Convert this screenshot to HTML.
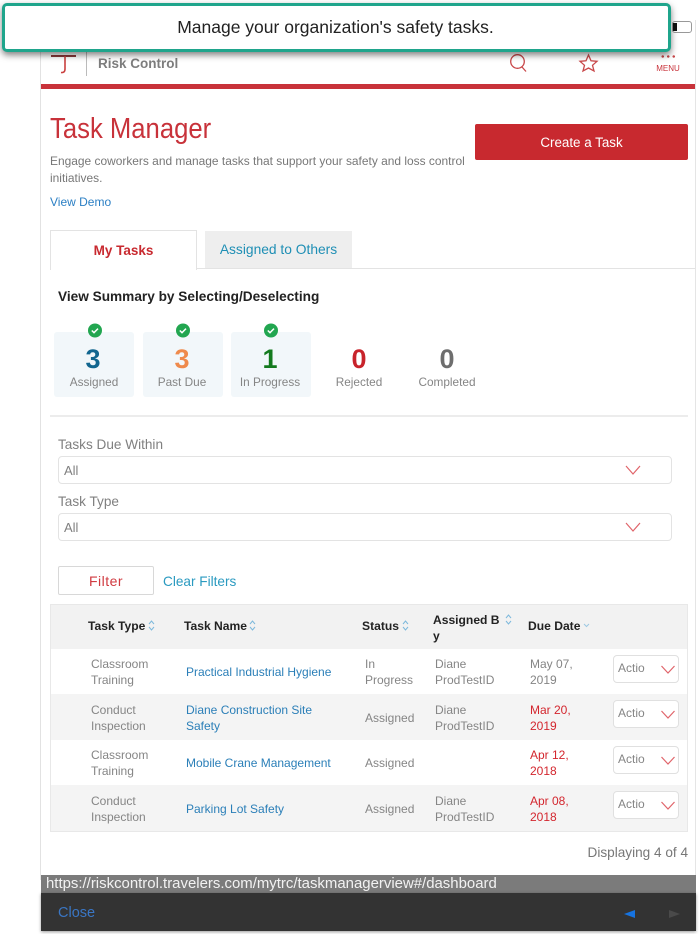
<!DOCTYPE html>
<html><head><meta charset="utf-8">
<style>
html,body{margin:0;padding:0;background:#fff}
body{width:700px;height:934px;position:relative;overflow:hidden;font-family:"Liberation Sans",sans-serif;color:#777}
#w{position:absolute;left:0;top:0;width:700px;height:934px;filter:blur(.35px)}
.a{position:absolute;white-space:nowrap}
.c{text-align:center}
.card{position:absolute;top:332px;width:80px;height:65px;background:#f2f7fa;border-radius:3px}
.num{position:absolute;top:343px;width:80px;text-align:center;font-size:27px;font-weight:bold;line-height:32px}
.lab{position:absolute;top:375px;width:90px;text-align:center;font-size:11.800px;line-height:15px;color:#858585}
.sel{position:absolute;left:58px;width:612px;height:26px;border:1px solid #e3e3e3;border-radius:4px;background:#fff}
.t{position:absolute;font-size:12px;line-height:16px;color:#858585}
.th{position:absolute;font-size:12.100px;font-weight:bold;color:#222;line-height:16px;white-space:nowrap}
.l{color:#2b7fb8;white-space:nowrap}
.r{color:#d3262e}
.act{position:absolute;left:613px;width:64px;height:26px;border:1px solid #e0e0e0;border-radius:4px;background:#fff;font-size:12px;color:#858585;line-height:25px;text-indent:4px}
svg{position:absolute;overflow:visible}
</style></head><body><div id="w">
<div style="position:absolute;left:40px;top:20px;width:1px;height:860px;background:#e2e2e2"></div>
<div style="position:absolute;left:695px;top:20px;width:1px;height:860px;background:#e5e5e5"></div>

<!-- header -->
<svg style="left:50px;top:52px" width="30" height="24" fill="none" stroke="#c9403f" stroke-width="1.6"><path d="M1 4H26" stroke="#8a3a3a" stroke-width="2"/><path d="M15 4V17Q15 21 11 20.500" /></svg>
<div style="position:absolute;left:86px;top:52px;width:1px;height:24px;background:#bbb"></div>
<div class="a" style="left:98px;top:55px;font-size:13.500px;font-weight:bold;color:#7d7d7d;line-height:17px">Risk Control</div>
<svg style="left:508px;top:53px" width="20" height="20" fill="none" stroke="#c9484a" stroke-width="1.3"><circle cx="9.500" cy="8.500" r="6.800"/><path d="M14 14L18 18.500"/></svg>
<svg style="left:578px;top:53px" width="20" height="20" fill="none" stroke="#c9484a" stroke-width="1.3"><path d="M10.500 2L13 7.800L19 8.300L14.500 12.300L16 18L10.500 15L5 18L6.500 12.300L2 8.300L8 7.800Z"/></svg>
<div class="a" style="left:660px;top:55px;width:16px;height:3px;background:radial-gradient(circle,#c9484a 1.100px,transparent 1.400px) 0 0/5.500px 3px"></div>
<div class="a c" style="left:650px;top:63px;width:36px;font-size:8px;color:#c8323a;line-height:11px">MENU</div>
<div style="position:absolute;left:41px;top:84px;width:654px;height:5px;background:#c8323a"></div>

<!-- tooltip battery -->
<div style="position:absolute;left:672px;top:21px;width:18px;height:10px;border:1px solid #999;border-radius:3px;background:#fff"><div style="position:absolute;left:0;top:1px;width:4px;height:8px;background:#111"></div></div>

<!-- callout -->
<div style="position:absolute;left:2px;top:3px;width:663px;height:43px;border:3px solid #1fa58c;border-radius:5px;background:#fff;box-shadow:0 3px 7px rgba(0,0,0,.5)"></div>
<div class="a c" style="left:1px;top:17px;width:669px;font-size:17.500px;color:#222;line-height:21px">Manage your organization's safety tasks.</div>

<!-- title -->
<div class="a" style="left:50px;top:113px;font-size:29px;color:#c8323a;line-height:33px;transform:scaleX(.885);transform-origin:0 0">Task Manager</div>
<div class="a" style="left:50px;top:153px;font-size:11.950px;line-height:17px;color:#777">Engage coworkers and manage tasks that support your safety and loss control<br>initiatives.</div>
<div class="a" style="left:50px;top:195px;font-size:12px;line-height:15px;color:#2b7fc4">View Demo</div>
<div class="a c" style="left:475px;top:124px;width:213px;height:36px;background:#c8292f;border-radius:2px;color:#fff;font-size:13.400px;line-height:37px">Create a Task</div>

<!-- tabs -->
<div style="position:absolute;left:50px;top:268px;width:645px;height:1px;background:#e3e3e3"></div>
<div class="a c" style="left:50px;top:230px;width:145px;height:39px;border:1px solid #e3e3e3;border-bottom:0;background:#fff;color:#c8292f;font-weight:bold;font-size:13.500px;line-height:39px">My Tasks</div>
<div class="a c" style="left:205px;top:231px;width:147px;height:37px;background:#eeeeee;color:#1f8fb5;font-size:13.800px;line-height:37px">Assigned to Others</div>

<div class="a" style="left:58px;top:288px;font-size:13.650px;font-weight:bold;color:#222;line-height:17px">View Summary by Selecting/Deselecting</div>

<!-- summary -->
<div class="card" style="left:54px"></div><div class="card" style="left:143px"></div><div class="card" style="left:231px"></div>
<svg style="left:87px;top:323px" width="16" height="16"><circle cx="8" cy="7.500" r="7" fill="#22a650"/><path d="M4.800 7.500L7 9.700L11 5.600" fill="none" stroke="#fff" stroke-width="1.500"/></svg>
<svg style="left:175px;top:323px" width="16" height="16"><circle cx="8" cy="7.500" r="7" fill="#22a650"/><path d="M4.800 7.500L7 9.700L11 5.600" fill="none" stroke="#fff" stroke-width="1.500"/></svg>
<svg style="left:263px;top:323px" width="16" height="16"><circle cx="8" cy="7.500" r="7" fill="#22a650"/><path d="M4.800 7.500L7 9.700L11 5.600" fill="none" stroke="#fff" stroke-width="1.500"/></svg>
<div class="num" style="left:53px;color:#12668f">3</div>
<div class="num" style="left:142px;color:#ef8a4c">3</div>
<div class="num" style="left:230px;color:#147a1e">1</div>
<div class="num" style="left:319px;color:#c8232b">0</div>
<div class="num" style="left:407px;color:#6e6e6e">0</div>
<div class="lab" style="left:49px">Assigned</div>
<div class="lab" style="left:137px">Past Due</div>
<div class="lab" style="left:225px">In Progress</div>
<div class="lab" style="left:314px">Rejected</div>
<div class="lab" style="left:402px">Completed</div>
<div style="position:absolute;left:50px;top:415px;width:638px;height:2px;background:#ececec"></div>

<!-- filters -->
<div class="a" style="left:58px;top:436px;font-size:13.600px;line-height:17px;color:#808080">Tasks Due Within</div>
<div class="sel" style="top:456px"></div>
<div class="a" style="left:64px;top:463px;font-size:13px;line-height:16px;color:#808080">All</div>
<svg style="left:625px;top:465px" width="16" height="10" fill="none" stroke="#e0646a" stroke-width="1.200"><path d="M1 1L8 9L15 1"/></svg>
<div class="a" style="left:58px;top:493px;font-size:13.600px;line-height:17px;color:#808080">Task Type</div>
<div class="sel" style="top:513px"></div>
<div class="a" style="left:64px;top:520px;font-size:13px;line-height:16px;color:#808080">All</div>
<svg style="left:625px;top:522px" width="16" height="10" fill="none" stroke="#e0646a" stroke-width="1.200"><path d="M1 1L8 9L15 1"/></svg>

<div class="a c" style="left:58px;top:566px;width:94px;height:27px;border:1px solid #d8d8d8;border-radius:2px;color:#d03a40;font-size:14px;letter-spacing:.5px;line-height:28px">Filter</div>
<div class="a" style="left:163px;top:573px;font-size:13.600px;line-height:17px;color:#2a9ac0">Clear Filters</div>

<!-- table -->
<div style="position:absolute;left:50px;top:604px;width:638px;height:228px;border:1px solid #e8e8e8;box-sizing:border-box;background:#fff"></div>
<div style="position:absolute;left:51px;top:605px;width:636px;height:44px;background:#f2f2f2"></div>
<div style="position:absolute;left:51px;top:694px;width:636px;height:46px;background:#f4f4f4"></div>
<div style="position:absolute;left:51px;top:785px;width:636px;height:46px;background:#f4f4f4"></div>

<div class="th" style="left:88px;top:618px">Task Type</div>
<div class="th" style="left:184px;top:618px">Task Name</div>
<div class="th" style="left:362px;top:618px">Status</div>
<div class="th" style="left:433px;top:612px">Assigned B<br>y</div>
<div class="th" style="left:528px;top:618px">Due Date</div>
<svg style="left:148px;top:620px" width="7" height="11" fill="none" stroke="#7cb8dc" stroke-width="1"><path d="M1 4L3.500 1L6 4M1 7L3.500 10L6 7"/></svg>
<svg style="left:249px;top:620px" width="7" height="11" fill="none" stroke="#7cb8dc" stroke-width="1"><path d="M1 4L3.500 1L6 4M1 7L3.500 10L6 7"/></svg>
<svg style="left:402px;top:620px" width="7" height="11" fill="none" stroke="#7cb8dc" stroke-width="1"><path d="M1 4L3.500 1L6 4M1 7L3.500 10L6 7"/></svg>
<svg style="left:505px;top:614px" width="7" height="11" fill="none" stroke="#7cb8dc" stroke-width="1"><path d="M1 4L3.500 1L6 4M1 7L3.500 10L6 7"/></svg>
<svg style="left:583px;top:623px" width="7" height="5" fill="none" stroke="#9cc8e2" stroke-width="1"><path d="M1 1L3.500 3.500L6 1"/></svg>

<!-- row 1 -->
<div class="t" style="left:91px;top:656px">Classroom<br>Training</div>
<div class="t l" style="left:186px;top:664px">Practical Industrial Hygiene</div>
<div class="t" style="left:365px;top:656px">In<br>Progress</div>
<div class="t" style="left:435px;top:656px">Diane<br>ProdTestID</div>
<div class="t" style="left:530px;top:656px">May 07,<br>2019</div>
<div class="act" style="top:655px">Actio</div>
<svg style="left:661px;top:665px" width="15" height="9" fill="none" stroke="#e0646a" stroke-width="1.200"><path d="M.5 1L7 8L13.500 1"/></svg>
<!-- row 2 -->
<div class="t" style="left:91px;top:702px">Conduct<br>Inspection</div>
<div class="t l" style="left:186px;top:702px">Diane Construction Site<br>Safety</div>
<div class="t" style="left:365px;top:710px">Assigned</div>
<div class="t" style="left:435px;top:702px">Diane<br>ProdTestID</div>
<div class="t r" style="left:530px;top:702px">Mar 20,<br>2019</div>
<div class="act" style="top:700px">Actio</div>
<svg style="left:661px;top:710px" width="15" height="9" fill="none" stroke="#e0646a" stroke-width="1.200"><path d="M.5 1L7 8L13.500 1"/></svg>
<!-- row 3 -->
<div class="t" style="left:91px;top:747px">Classroom<br>Training</div>
<div class="t l" style="left:186px;top:755px">Mobile Crane Management</div>
<div class="t" style="left:365px;top:755px">Assigned</div>
<div class="t r" style="left:530px;top:747px">Apr 12,<br>2018</div>
<div class="act" style="top:746px">Actio</div>
<svg style="left:661px;top:756px" width="15" height="9" fill="none" stroke="#e0646a" stroke-width="1.200"><path d="M.5 1L7 8L13.500 1"/></svg>
<!-- row 4 -->
<div class="t" style="left:91px;top:793px">Conduct<br>Inspection</div>
<div class="t l" style="left:186px;top:801px">Parking Lot Safety</div>
<div class="t" style="left:365px;top:801px">Assigned</div>
<div class="t" style="left:435px;top:793px">Diane<br>ProdTestID</div>
<div class="t r" style="left:530px;top:793px">Apr 08,<br>2018</div>
<div class="act" style="top:791px">Actio</div>
<svg style="left:661px;top:801px" width="15" height="9" fill="none" stroke="#e0646a" stroke-width="1.200"><path d="M.5 1L7 8L13.500 1"/></svg>

<div class="a" style="right:12px;top:845px;font-size:13.600px;line-height:16px;color:#777">Displaying 4 of 4</div>

<!-- bottom bars -->
<div style="position:absolute;left:41px;top:875px;width:655px;height:18px;background:#7b7b7b"></div>
<div class="a" style="left:46px;top:875px;font-size:14.950px;line-height:18px;color:#f2f2f2">https://riskcontrol.travelers.com/mytrc/taskmanagerview#/dashboard</div>
<div style="position:absolute;left:41px;top:893px;width:655px;height:38px;background:#333;box-shadow:0 1px 3px rgba(0,0,0,.4)"></div>
<div class="a" style="left:58px;top:905px;font-size:14.500px;line-height:17px;color:#3a76c4">Close</div>
<svg style="left:624px;top:910px" width="12" height="8"><path d="M0 4L11 0V8Z" fill="#1673e0"/></svg>
<svg style="left:669px;top:910px" width="12" height="8"><path d="M11 4L0 0V8Z" fill="#4a4a4a"/></svg>
</div></body></html>
